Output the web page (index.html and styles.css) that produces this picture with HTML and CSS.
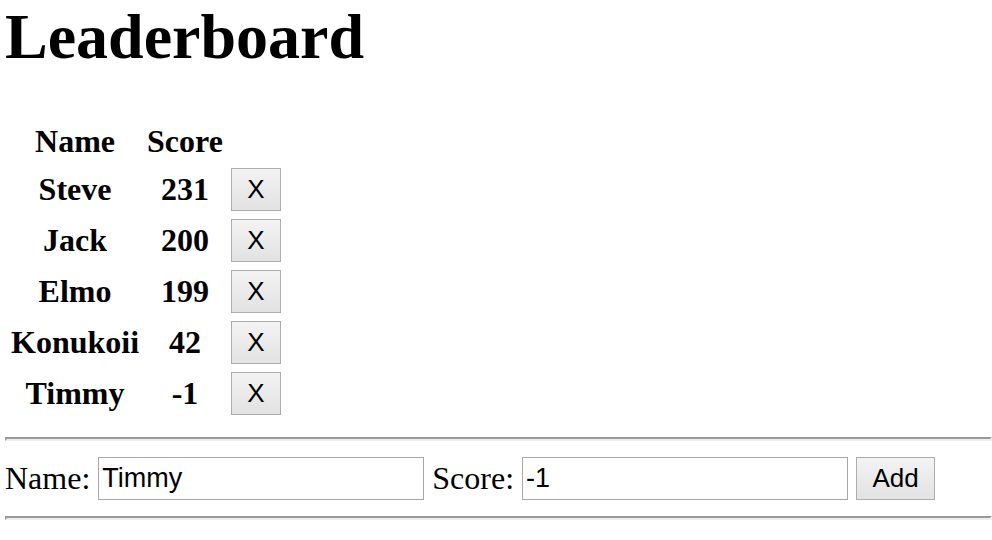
FILE: index.html
```html
<!DOCTYPE html>
<html lang="en">
<head>
    <meta charset="UTF-8">
    <title>Leaderboard</title>
    <link rel="stylesheet" href="styles.css">
</head>
<body>
    <h1 class="title">Leaderboard</h1>

    <table class="board" id="board">
        <tr>
            <th>Name</th>
            <th>Score</th>
            <th></th>
        </tr>
        <tr>
            <td>Steve</td>
            <td>231</td>
            <td><button class="remove-btn">X</button></td>
        </tr>
        <tr>
            <td>Jack</td>
            <td>200</td>
            <td><button class="remove-btn">X</button></td>
        </tr>
        <tr>
            <td>Elmo</td>
            <td>199</td>
            <td><button class="remove-btn">X</button></td>
        </tr>
        <tr>
            <td>Konukoii</td>
            <td>42</td>
            <td><button class="remove-btn">X</button></td>
        </tr>
        <tr>
            <td>Timmy</td>
            <td>-1</td>
            <td><button class="remove-btn">X</button></td>
        </tr>
    </table>

    <hr class="rule">

    <form class="add-form" onsubmit="return false;">
        <label for="nameInput">Name:</label>
        <input type="text" id="nameInput" class="field" value="Timmy">
        <label for="scoreInput">Score:</label>
        <input type="text" id="scoreInput" class="field" value="-1">
        <button class="add-btn" type="submit">Add</button>
    </form>

    <hr class="rule">
</body>
</html>
```

FILE: styles.css
```css
body {
    font-family: "Liberation Serif", "Times New Roman", serif;
    font-size: 32px;
    margin: 0 0 0 5px;
    background-color: white;
    color: black;
}
.title {
    font-size: 64px;
    font-weight: bold;
    margin: 0 0 43px 0;
}
.board {
    border-collapse: separate;
    border-spacing: 4px;
}
.board th,
.board td {
    padding: 2px;
    text-align: center;
    font-weight: bold;
    vertical-align: middle;
}
.remove-btn,
.add-btn {
    font-family: "Liberation Sans", Arial, sans-serif;
    font-size: 26px;
    color: black;
    height: 43px;
    padding: 0;
    border: 1px solid #adadad;
    border-radius: 0;
    background: linear-gradient(#f3f3f3, #e2e2e2);
    box-sizing: border-box;
}
.remove-btn {
    width: 50px;
}
.add-btn {
    width: 79px;
}
.rule {
    margin: 16px 0;
    height: 0;
    border-style: solid;
    border-width: 2px;
    border-color: #9a9a9a #eeeeee #eeeeee #9a9a9a;
}
.add-form {
    display: flex;
    align-items: center;
    gap: 8px;
}
.field {
    font-family: "Liberation Sans", Arial, sans-serif;
    font-size: 27px;
    width: 326px;
    height: 43px;
    padding: 0 3px;
    border: 1px solid #a9a9a9;
    border-radius: 0;
    box-sizing: border-box;
    outline: none;
}
```
